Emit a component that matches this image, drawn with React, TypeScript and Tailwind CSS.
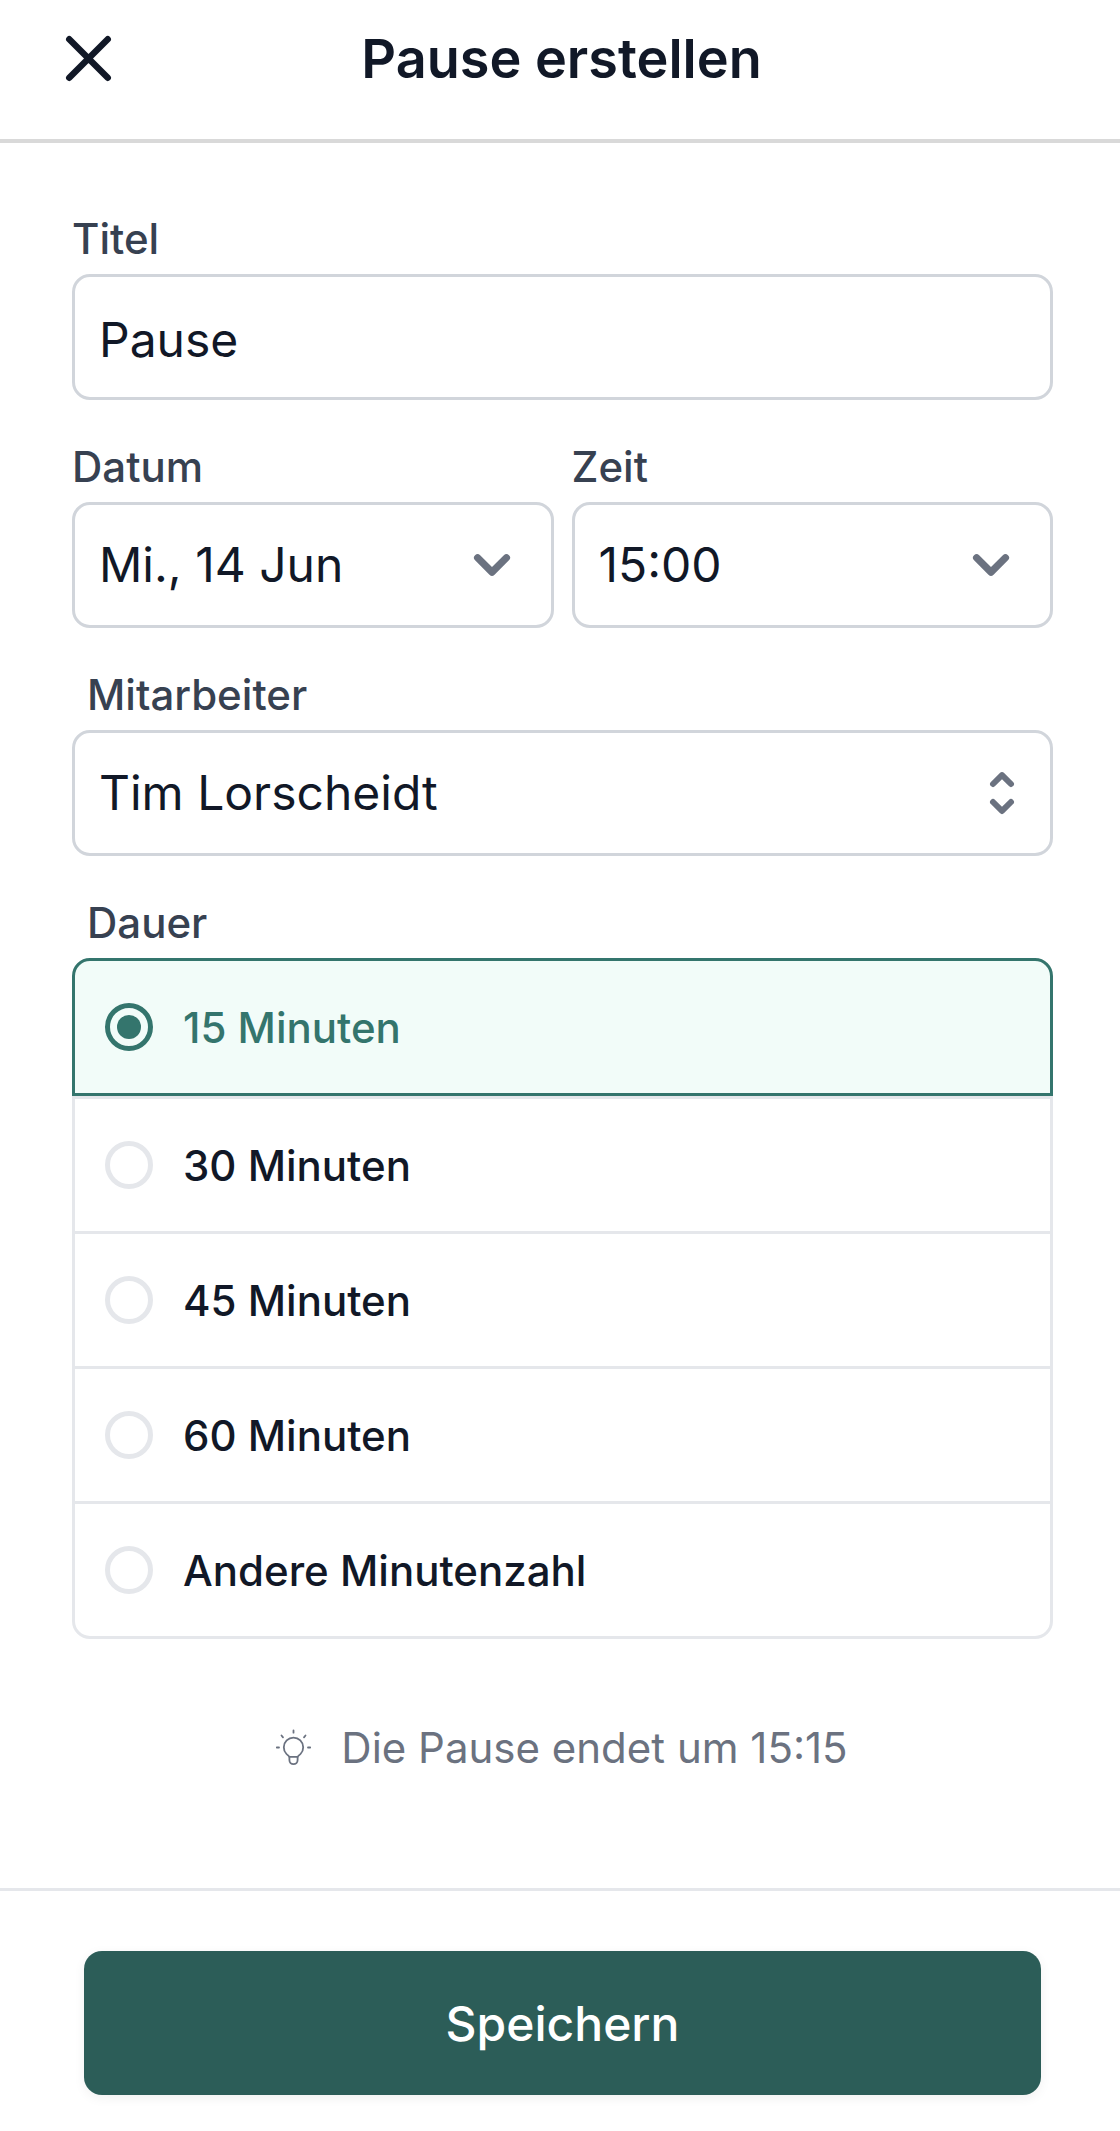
import { useState } from 'react';
import type { ReactNode } from 'react';
import { HiChevronDown, HiSelector } from 'react-icons/hi';
import clsx from 'clsx';

const durations = [
  { value: '15', label: '15 Minuten' },
  { value: '30', label: '30 Minuten' },
  { value: '45', label: '45 Minuten' },
  { value: '60', label: '60 Minuten' },
  { value: 'custom', label: 'Andere Minutenzahl' },
];

const labelClass = 'mb-[5px] block text-[42px] leading-[60px] font-medium text-[#374151]';
const fieldClass =
  'h-[126px] w-full appearance-none rounded-[18px] border-3 border-[#d1d5db] bg-white px-6 text-[48px] text-[#111827] outline-none focus:border-[#34756d]';

function CloseIcon() {
  return (
    <svg viewBox="0 0 24 24" className="size-[77px]" fill="none" stroke="currentColor" strokeWidth="2" strokeLinecap="round" aria-hidden="true">
      <path d="M6 18L18 6M6 6l12 12" />
    </svg>
  );
}

function BulbIcon() {
  return (
    <svg viewBox="0 0 52 52" className="size-13" fill="none" stroke="currentColor" strokeWidth="1.8" strokeLinecap="round" strokeLinejoin="round" aria-hidden="true">
      <path d="M21.4 34.800c-1-1.200-2-1.800-2.900-2.800a9.700 9.700 0 1 1 14 0c-.9 1-1.900 1.600-2.900 2.800z" />
      <path d="M21.400 34.800v3.300a4.100 4.100 0 0 0 8.200 0v-3.300" />
      <path d="M25.500 8.500v2.200M8.800 25.500h2.200M40 25.500h2.200M13.500 13.500l1.500 1.800M37.500 13.500l-1.500 1.800" />
    </svg>
  );
}

function SelectField({
  id,
  label,
  options,
  icon,
  indentLabel = false,
}: {
  id: string;
  label: string;
  options: string[];
  icon: ReactNode;
  indentLabel?: boolean;
}) {
  return (
    <div>
      <label htmlFor={id} className={clsx(labelClass, indentLabel && 'pl-[15px]')}>
        {label}
      </label>
      <div className="relative">
        <select id={id} className={fieldClass}>
          {options.map(option => (
            <option key={option}>{option}</option>
          ))}
        </select>
        <span className="pointer-events-none absolute inset-y-0 right-0 flex items-center text-[#6b7280]">
          {icon}
        </span>
      </div>
    </div>
  );
}

export default function App() {
  const [title, setTitle] = useState('Pause');
  const [duration, setDuration] = useState('15');

  return (
    <div className="min-h-screen bg-white font-['Inter',sans-serif] text-[#111827]">
      <header className="flex items-center justify-between border-b-4 border-[#d9d9d9] pt-5 pr-[47px] pb-[42px] pl-[50px]">
        <button type="button" aria-label="Schließen">
          <CloseIcon />
        </button>
        <h1 className="text-[54px] leading-[76px] font-semibold">Pause erstellen</h1>
        <div className="w-[77px]" />
      </header>

      <form onSubmit={e => e.preventDefault()}>
        <div className="flex flex-col gap-[37px] pt-[66px] pr-[67px] pl-[72px]">
          <div>
            <label htmlFor="title" className={labelClass}>
              Titel
            </label>
            <input
              id="title"
              type="text"
              value={title}
              onChange={e => setTitle(e.target.value)}
              className={clsx(fieldClass, 'block pt-1')}
            />
          </div>

          <div className="grid grid-cols-2 gap-[18px]">
            <SelectField
              id="date"
              label="Datum"
              options={['Mi., 14 Jun', 'Do., 15 Jun', 'Fr., 16 Jun']}
              icon={<HiChevronDown className="mr-[26px] size-18" />}
            />
            <SelectField
              id="time"
              label="Zeit"
              options={['15:00', '15:15', '15:30']}
              icon={<HiChevronDown className="mr-[26px] size-18" />}
            />
          </div>

          <SelectField
            id="employee"
            label="Mitarbeiter"
            options={['Tim Lorscheidt']}
            icon={<HiSelector className="mr-[21px] size-15" />}
            indentLabel
          />

          <fieldset>
            <legend className={clsx(labelClass, 'pl-[15px]')}>Dauer</legend>
            <div>
              {durations.map(({ value, label }, index) => {
                const checked = value === duration;
                const afterChecked = index > 0 && durations[index - 1].value === duration;
                return (
                  <label
                    key={value}
                    className={clsx(
                      'flex h-[138px] items-center gap-[30px] border-3 px-[30px] text-[42px] font-medium first:rounded-t-[18px] last:rounded-b-[18px]',
                      checked ? 'border-[#34756d] bg-[#f2fcf9] text-[#34756d]' : 'border-[#e5e7eb]',
                      index > 0 && !afterChecked && '-mt-[3px]',
                    )}
                  >
                    <input
                      type="radio"
                      name="duration"
                      value={value}
                      checked={checked}
                      onChange={() => setDuration(value)}
                      className="grid size-12 shrink-0 appearance-none place-content-center rounded-full border-5 border-[#e5e7eb] before:size-6 before:rounded-full checked:border-[#34756d] checked:before:bg-[#34756d]"
                    />
                    {label}
                  </label>
                );
              })}
            </div>
          </fieldset>
        </div>

        <p className="flex items-center justify-center gap-[21px] pt-[79px] pr-1 pb-[110px] text-[42px] leading-[60px] text-[#6b7280]">
          <BulbIcon />
          Die Pause endet um 15:15
        </p>

        <div className="border-t-3 border-[#e5e7eb] pt-15 pr-[79px] pb-9 pl-[84px]">
          <button
            type="submit"
            className="h-36 w-full rounded-[18px] bg-[#2c5d58] pt-[2px] text-[48px] font-medium text-white shadow-[0_3px_12px_rgba(0,0,0,0.06)]"
          >
            Speichern
          </button>
        </div>
      </form>
    </div>
  );
}
